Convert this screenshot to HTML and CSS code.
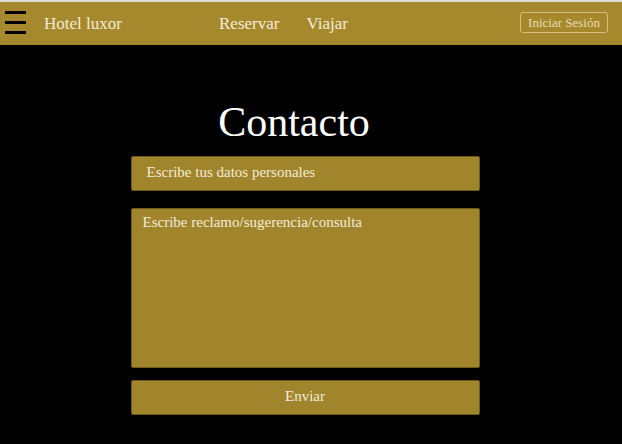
FILE: index.html
```html
<!DOCTYPE html>
<html lang="es">
<head>
<meta charset="utf-8">
<title>Contacto - Hotel luxor</title>
<link rel="stylesheet" href="styles.css">
</head>
<body>
<header class="nav">
  <div class="nav-left">
    <div class="burger"><span></span><span></span><span></span></div>
    <span class="brand">Hotel luxor</span>
  </div>
  <nav class="links">
    <a href="#">Reservar</a>
    <a href="#">Viajar</a>
  </nav>
  <button class="login">Iniciar Sesión</button>
</header>
<main class="main">
  <h1 class="title">Contacto</h1>
  <form class="form">
    <div class="field input">Escribe tus datos personales</div>
    <div class="field area">Escribe reclamo/sugerencia/consulta</div>
    <button class="field send" type="button">Enviar</button>
  </form>
</main>
</body>
</html>
```

FILE: styles.css
```css
html, body {
  margin: 0;
  padding: 0;
  background: #000;
  height: 100%;
}
body {
  border-top: 2px solid #dcdcdc;
  font-family: "Liberation Serif", "DejaVu Serif", serif;
  color: #f3ecd8;
}
.nav {
  height: 43px;
  background: #a6892c;
  display: flex;
  align-items: center;
  padding: 0 14px 0 5px;
}
.nav-left {
  display: flex;
  align-items: center;
  gap: 18px;
  width: 214px;
}
.burger {
  display: flex;
  flex-direction: column;
  gap: 7px;
  width: 21px;
  margin-top: -2px;
}
.burger span {
  display: block;
  height: 3px;
  background: #000;
}
.brand {
  font-size: 17px;
  color: #f3ecd8;
}
.links {
  display: flex;
  gap: 27px;
  flex: 1;
}
.links a {
  color: #f3ecd8;
  text-decoration: none;
  font-size: 17px;
}
.login {
  font-family: "Liberation Serif", "DejaVu Serif", serif;
  font-size: 13px;
  color: #e8dcb6;
  background: transparent;
  border: 1px solid #d2bf82;
  border-radius: 3px;
  width: 88px;
  height: 21px;
  padding: 0;
  margin-top: -2px;
}
.main {
  display: flex;
  flex-direction: column;
  align-items: center;
}
.title {
  margin: 51px 0 0 -34px;
  font-weight: normal;
  font-size: 42px;
  line-height: 52px;
  color: #fff;
}
.form {
  display: flex;
  flex-direction: column;
  gap: 17px;
  width: 349px;
  margin: 8px 0 0 -12px;
}
.field {
  background: #a0852c;
  border: 1px solid #6e5b1c;
  border-radius: 2px;
  color: #f3ecd8;
  font-family: "Liberation Serif", "DejaVu Serif", serif;
  font-size: 15px;
  box-sizing: border-box;
}
.input {
  height: 35px;
  padding: 7px 15px;
}
.area {
  height: 160px;
  padding: 5px 11px;
}
.send {
  height: 35px;
  margin-top: -5px;
  text-align: center;
  padding: 0 0 3px;
}
```
